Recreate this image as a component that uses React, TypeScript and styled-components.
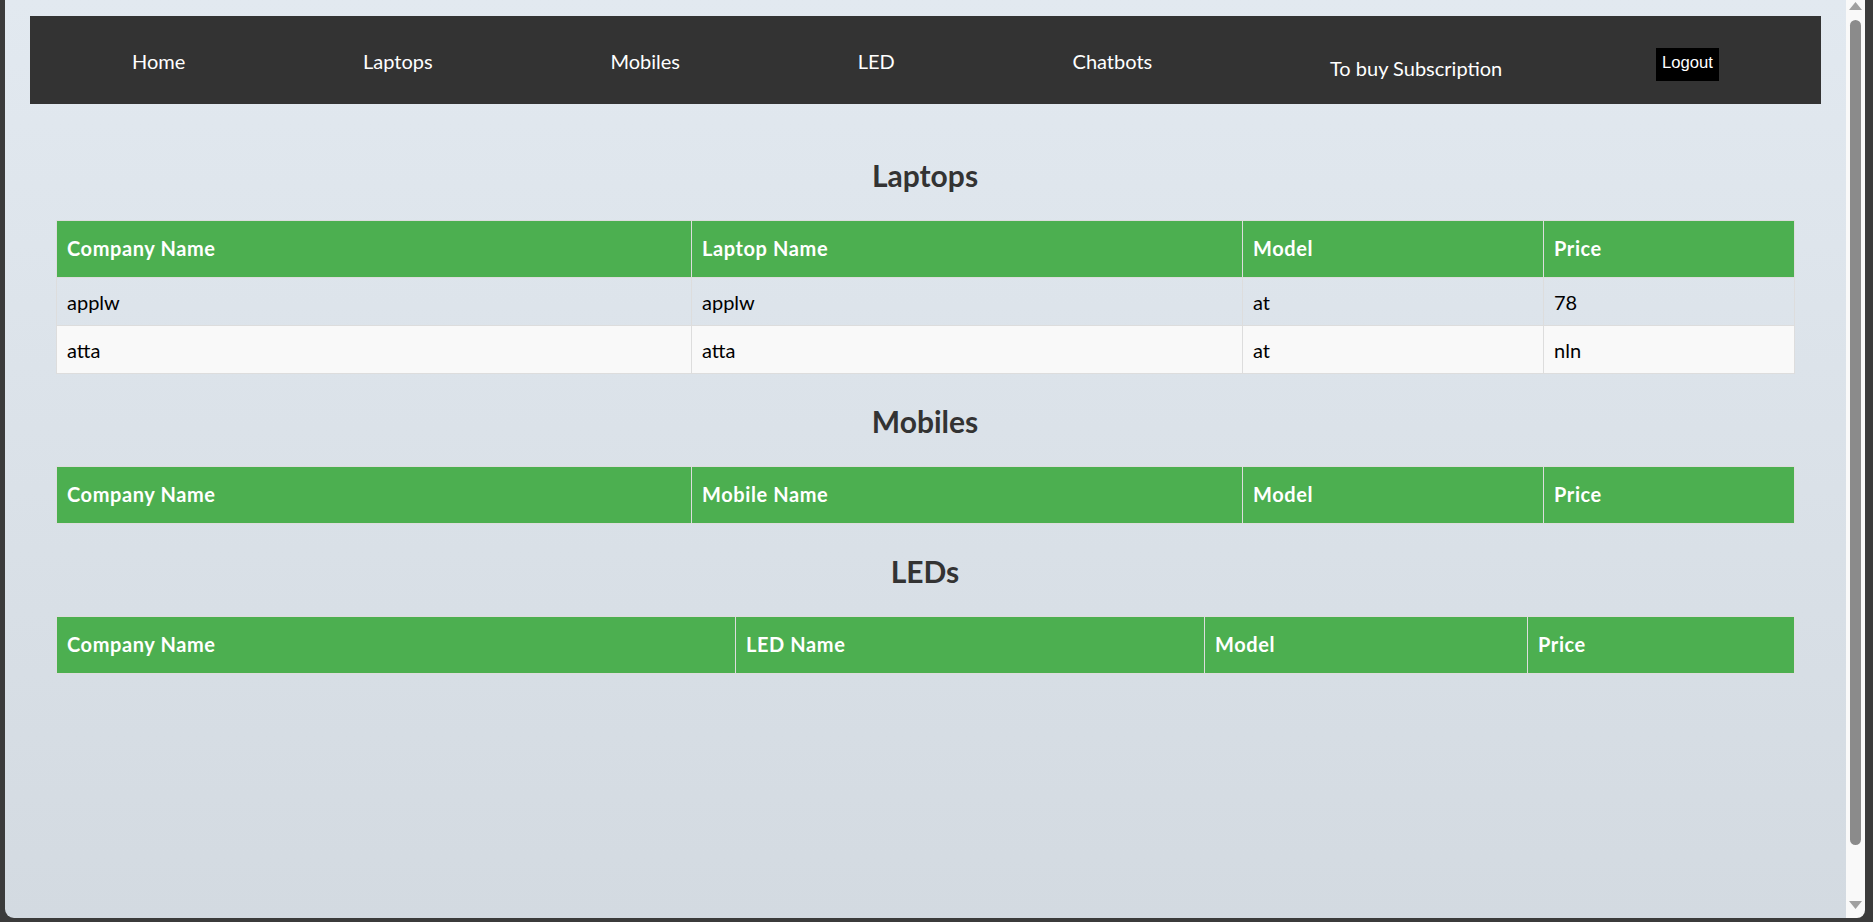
import React from "react";
import styled, { createGlobalStyle } from "styled-components";

const GlobalStyle = createGlobalStyle`
  html, body {
    margin: 0;
    padding: 0;
    height: 100%;
    overflow: hidden;
    background: #3b3b3b;
  }
  #root { height: 100%; }
  * { box-sizing: border-box; }
`;

const Frame = styled.div`
  display: flex;
  height: 922px;
  padding: 0 8px 4px 5px;
  background: #3b3b3b;
`;

const Viewport = styled.div`
  flex: 1;
  display: flex;
  flex-direction: column;
  overflow: hidden;
  border-bottom-left-radius: 9px;
  background: linear-gradient(to bottom, #e2e9f0 0%, #d3dae1 100%);
  font-family: "Lato", "Open Sans", sans-serif;
`;

const Scrollbar = styled.div`
  width: 19px;
  display: flex;
  flex-direction: column;
  align-items: center;
  background: #f9f9f9;
  border-bottom-right-radius: 8px;
  padding: 2px 0 9px;
`;

const Thumb = styled.div`
  width: 11px;
  height: 825px;
  margin-top: 10px;
  border-radius: 6px;
  background: #8b8b8b;
`;

const Spacer = styled.div`
  flex: 1;
`;

const Nav = styled.nav`
  margin: 16px 25px 0;
  height: 88px;
  background: #333333;
  display: flex;
  align-items: center;
  justify-content: space-between;
  padding: 0 102px;
`;

const NavLink = styled.a<{ $drop: number; $trim?: number }>`
  color: #ffffff;
  text-decoration: none;
  font-size: 20px;
  line-height: 25px;
  margin-top: ${(p) => p.$drop}px;
  margin-right: ${(p) => -(p.$trim ?? 0)}px;
  white-space: nowrap;
`;

const LogoutButton = styled.button`
  margin-top: 9px;
  height: 33px;
  padding: 0 6px 4px;
  border: none;
  background: #000000;
  color: #ffffff;
  font-family: "Liberation Sans", Arial, sans-serif;
  font-size: 16.67px;
  line-height: 19px;
  display: flex;
  align-items: center;
`;

const Main = styled.main`
  padding: 24px 52px 0 51px;
`;

const Heading = styled.h2`
  margin: 26px 0 24px;
  font-size: 30px;
  line-height: 42px;
  font-weight: 700;
  color: #333333;
  text-align: center;
`;

const Table = styled.table`
  width: 100%;
  border-collapse: collapse;
  table-layout: fixed;
`;

const Col = styled.col<{ $w: number }>`
  width: ${(p) => p.$w}px;
`;

const HeadCell = styled.th`
  background: #4caf50;
  color: #ffffff;
  font-weight: 700;
  font-size: 20px;
  line-height: 25px;
  letter-spacing: 0.6px;
  text-align: left;
  padding: 15px 10px 16px;
  border: 1px solid #dddddd;
`;

const Row = styled.tr<{ $even: boolean }>`
  background: ${(p) => (p.$even ? "#f9f9f9" : "transparent")};
`;

const Cell = styled.td`
  color: #000000;
  font-size: 20px;
  line-height: 24px;
  text-align: left;
  padding: 11.5px 10px;
  border: 1px solid #dddddd;
`;

const Arrow = ({ up }: { up: boolean }) => (
  <svg width="13" height="8" viewBox="0 0 13 8">
    <path d={up ? "M6.5 0 L13 8 L0 8 Z" : "M0 0 L13 0 L6.5 8 Z"} fill="#a0a0a0" />
  </svg>
);

type TableProps = {
  headers: string[];
  widths: number[];
  rows: string[][];
};

const DataTable = ({ headers, widths, rows }: TableProps) => (
  <Table>
    <colgroup>
      {widths.map((w, i) => (
        <Col key={i} $w={w} />
      ))}
    </colgroup>
    <thead>
      <tr>
        {headers.map((h) => (
          <HeadCell key={h}>{h}</HeadCell>
        ))}
      </tr>
    </thead>
    <tbody>
      {rows.map((r, i) => (
        <Row key={i} $even={i % 2 === 1}>
          {r.map((c, j) => (
            <Cell key={j}>{c}</Cell>
          ))}
        </Row>
      ))}
    </tbody>
  </Table>
);

export default function App() {
  return (
    <>
      <GlobalStyle />
      <Frame>
        <Viewport>
          <Nav>
            <NavLink href="#" $drop={3}>Home</NavLink>
            <NavLink href="#" $drop={3}>Laptops</NavLink>
            <NavLink href="#" $drop={3}>Mobiles</NavLink>
            <NavLink href="#" $drop={3}>LED</NavLink>
            <NavLink href="#" $drop={3}>Chatbots</NavLink>
            <NavLink href="#" $drop={17} $trim={24}>To buy Subscription</NavLink>
            <LogoutButton>Logout</LogoutButton>
          </Nav>
          <Main>
            <Heading>Laptops</Heading>
            <DataTable
              headers={["Company Name", "Laptop Name", "Model", "Price"]}
              widths={[635, 551, 301, 251]}
              rows={[
                ["applw", "applw", "at", "78"],
                ["atta", "atta", "at", "nln"],
              ]}
            />
            <Heading>Mobiles</Heading>
            <DataTable
              headers={["Company Name", "Mobile Name", "Model", "Price"]}
              widths={[635, 551, 301, 251]}
              rows={[]}
            />
            <Heading>LEDs</Heading>
            <DataTable
              headers={["Company Name", "LED Name", "Model", "Price"]}
              widths={[679, 469, 323, 267]}
              rows={[]}
            />
          </Main>
        </Viewport>
        <Scrollbar>
          <Arrow up />
          <Thumb />
          <Spacer />
          <Arrow up={false} />
        </Scrollbar>
      </Frame>
    </>
  );
}
